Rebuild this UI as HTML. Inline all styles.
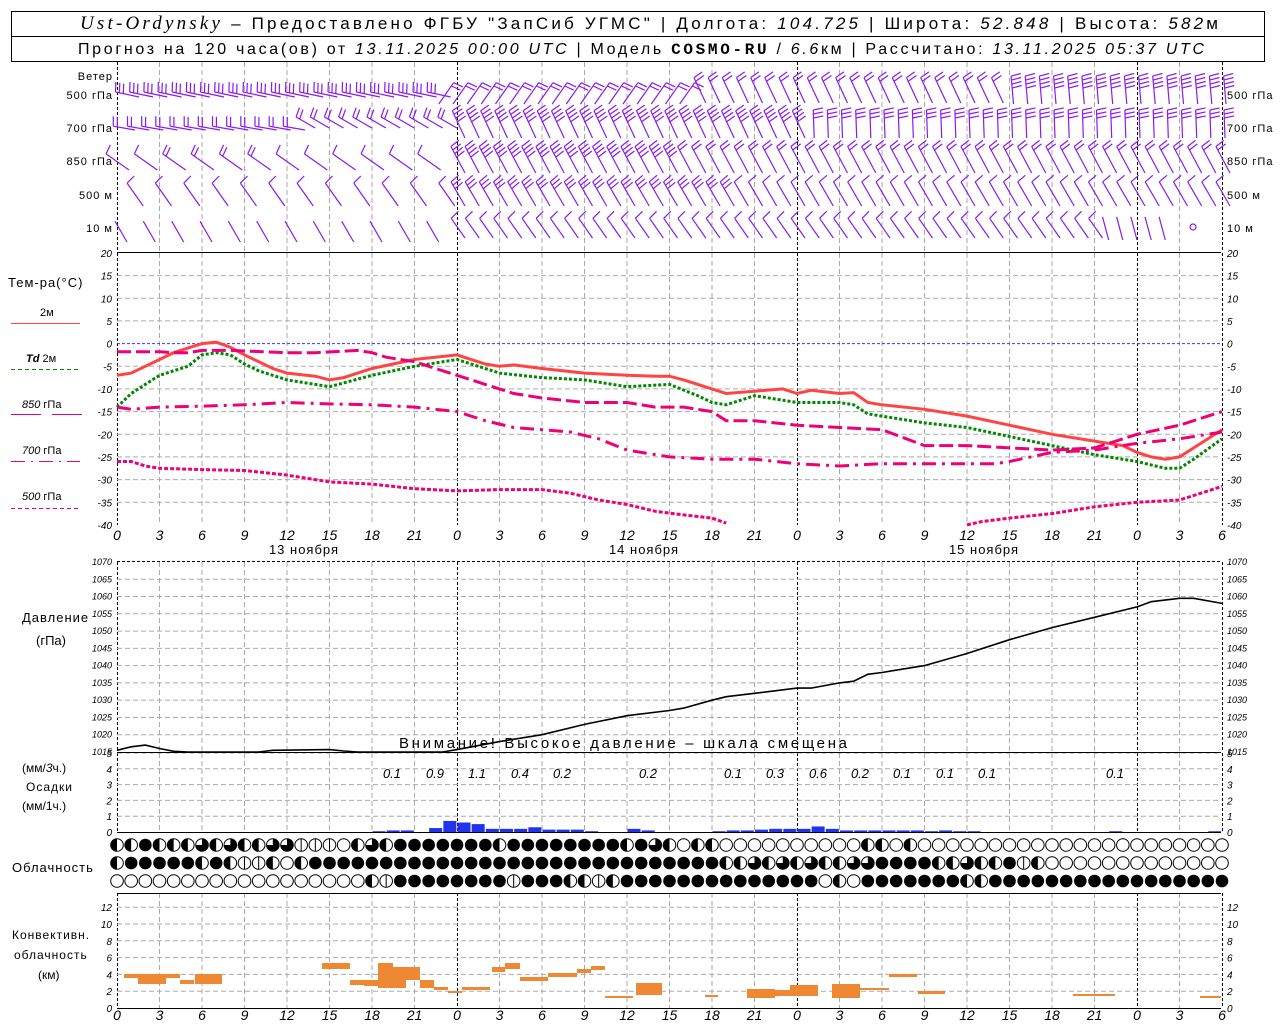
<!DOCTYPE html>
<html><head><meta charset="utf-8"><style>
html,body{margin:0;padding:0;background:#fff}
svg{display:block}
text{font-family:"Liberation Sans",sans-serif}
.it{font-style:italic}
</style></head><body>
<svg id="s" width="1280" height="1024" xmlns="http://www.w3.org/2000/svg">
<rect width="1280" height="1024" fill="#fff"/>
<rect x="11.5" y="11.5" width="1253" height="50" fill="none" stroke="#000"/>
<line x1="11" y1="36.5" x2="1265" y2="36.5" stroke="#000"/>
<text x="80" y="29" font-size="17" textLength="1138" lengthAdjust="spacing"><tspan font-family="Liberation Serif" font-style="italic" font-size="19">Ust-Ordynsky</tspan> – Предоставлено ФГБУ "ЗапСиб УГМС" | Долгота: <tspan class="it">104.725</tspan> | Широта: <tspan class="it">52.848</tspan> | Высота: <tspan class="it">582</tspan>м</text>
<text x="78" y="54" font-size="16" textLength="1126" lengthAdjust="spacing">Прогноз на 120 часа(ов) от <tspan class="it">13.11.2025 00:00 UTC</tspan> | Модель <tspan font-weight="bold" font-family="Liberation Mono">COSMO-RU</tspan> / <tspan class="it">6.6</tspan>км | Рассчитано: <tspan class="it">13.11.2025 05:37 UTC</tspan></text>
<g id="g"></g>
</svg>
<script>
var G=document.getElementById('g'),H='';
function X(h){return 117+h*340/24}
function ln(a,b,c,d,st){H+='<line x1="'+a+'" y1="'+b+'" x2="'+c+'" y2="'+d+'" '+st+'/>';}
function tx(x,y,s,t,extra){H+='<text x="'+x+'" y="'+y+'" font-size="'+s+'" '+(extra||'')+'>'+t+'</text>';}
var gray='stroke="#aaa" stroke-dasharray="5,3"';
var panels=[[62,252],[253,525],[562,752],[753,832],[893,1008]];
panels.forEach(function(p){for(var h=3;h<78;h+=3){if(h%24==0)continue;ln(X(h),p[0],X(h),p[1],gray);}
 [0,24,48,72,78].forEach(function(h){ln(X(h)+.5,p[0],X(h)+.5,p[1],'stroke="#000" stroke-dasharray="3,2"');});});
function TY(t){return 343.6-t*4.533}
function PY(p){return 752-(p-1015)*3.455}
function RY(v){return 832-v*15.8}
function CY(k){return 1008-k*8.4}
for(var t=15;t>-40;t-=5){ln(117,TY(t),1221,TY(t),t==0?'stroke="#33f" stroke-dasharray="3,2"':gray);}
for(var p=1020;p<1070;p+=5)ln(117,PY(p),1221,PY(p),gray);
for(var v=1;v<=5;v++)ln(117,RY(v),1221,RY(v),gray);
for(var k=2;k<=12;k+=2)ln(117,CY(k),1221,CY(k),gray);
ln(117,252.5,1221,252.5,'stroke="#000"');ln(117,752.5,1221,752.5,'stroke="#000"');
ln(117,832.5,1221,832.5,'stroke="#000"');ln(117,893.5,1221,893.5,'stroke="#000"');
ln(117,1008.5,1221,1008.5,'stroke="#000"');ln(117,561.5,1221,561.5,'stroke="#000" stroke-dasharray="3,2"');
for(t=20;t>=-40;t-=5){tx(112,TY(t)+4,10,t,'text-anchor="end" font-style="italic"');tx(1227,TY(t)+4,10,t,'font-style="italic"');}
for(p=1015;p<=1070;p+=5){tx(112,PY(p)+3,9,p,'text-anchor="end" font-style="italic"');tx(1227,PY(p)+3,9,p,'font-style="italic"');}
for(v=0;v<=5;v++){tx(112,RY(v)+4,10,v,'text-anchor="end" font-style="italic"');tx(1227,RY(v)+4,10,v,'font-style="italic"');}
for(k=0;k<=12;k+=2){tx(112,CY(k)+4,10,k,'text-anchor="end" font-style="italic"');tx(1227,CY(k)+4,10,k,'font-style="italic"');}
for(var h=0;h<=78;h+=3){var l=h%24;tx(X(h),540,14,l,'text-anchor="middle" font-style="italic"');tx(X(h),1020,14,l,'text-anchor="middle" font-style="italic"');}
tx(X(13.2),554,13,'13 ноября','text-anchor="middle" letter-spacing="1"');
tx(X(37.2),554,13,'14 ноября','text-anchor="middle" letter-spacing="1"');
tx(X(61.2),554,13,'15 ноября','text-anchor="middle" letter-spacing="1"');
[['Ветер',80,0],['500 гПа',99,1],['700 гПа',132,1],['850 гПа',165,1],['500 м',199,1],['10  м',232,1]].forEach(function(a){tx(113,a[1],11,a[0],'text-anchor="end" letter-spacing="1"');if(a[2])tx(1227,a[1],11,a[0],'letter-spacing="1"');});
tx(8,287,13,'Тем-ра(°C)','letter-spacing="1"');
tx(40,316,11,'2м');ln(11,323.5,80,323.5,'stroke="#f44"');
tx(26,362,11,'<tspan font-style="italic" font-weight="bold">Td</tspan>  2м');ln(11,369.5,80,369.5,'stroke="#080" stroke-dasharray="4,3"');
tx(22,408,11,'<tspan font-style="italic">850</tspan> гПа');ln(11,414.5,41,414.5,'stroke="#e07"');ln(52,414.5,82,414.5,'stroke="#e07"');
tx(22,454,11,'<tspan font-style="italic">700</tspan> гПа');ln(11,461.5,80,461.5,'stroke="#e07" stroke-dasharray="14,6,2,6"');
tx(22,500,11,'<tspan font-style="italic">500</tspan> гПа');ln(11,508.5,80,508.5,'stroke="#e07" stroke-dasharray="4,3"');
tx(22,622,13,'Давление','letter-spacing="1"');tx(36,645,13,'(гПа)');
tx(22,772,12,'(мм/<tspan font-style="italic">3</tspan>ч.)');tx(26,791,12,'Осадки','letter-spacing="1"');tx(22,810,12,'(мм/1ч.)');
tx(12,872,13,'Облачность','letter-spacing="1"');
tx(12,939,12,'Конвективн.','letter-spacing="1"');tx(14,959,12,'облачность','letter-spacing="1"');tx(38,979,12,'(км)');
function poly(pts,f,st){var d='';pts.forEach(function(q,i){d+=(i?'L':'M')+X(q[0]).toFixed(1)+','+f(q[1]).toFixed(1);});H+='<path d="'+d+'" fill="none" '+st+'/>';}
poly([[0,-14],[1,-11],[2,-9],[3,-7],[4,-6],[5,-5],[6,-2.5],[7,-2],[8,-2.5],[9,-4.5],[10,-6],[12,-8],[15,-9.5],[18,-7],[21,-5],[24,-3.5],[25,-4.5],[27,-6.5],[30,-7.5],[33,-8],[36,-9.5],[39,-9],[41,-11.5],[42,-13],[43,-13.5],[44,-12.5],[45,-11.5],[48,-13],[51,-13],[52,-13.5],[53,-15.5],[55,-16.5],[57,-17.5],[60,-18.5],[63,-20.5],[66,-22.5],[69,-24.5],[72,-26],[74,-27.5],[75,-27.5],[76,-25.5],[78,-21]],TY,'stroke="#080" stroke-width="3" stroke-dasharray="3,2"');
poly([[0,-7],[1,-6.5],[2,-5],[3,-3.5],[4,-2],[5,-1],[6,0],[7,0.3],[8,-0.8],[9,-2.5],[10,-4],[11,-5.5],[12,-6.5],[14,-7.2],[15,-8],[16,-7.5],[18,-5.5],[21,-3.5],[24,-2.5],[26,-4.5],[27,-5],[28,-4.7],[30,-5.5],[33,-6.5],[36,-7],[38,-7.2],[39,-7.2],[40,-8],[42,-10],[43,-11],[45,-10.5],[47,-10],[48,-11],[49,-10.3],[51,-11],[52,-10.8],[53,-13],[54,-13.5],[57,-14.5],[60,-16],[63,-18],[66,-20],[69,-21.5],[71,-22.5],[72,-24],[73,-25],[74,-25.5],[75,-25],[76,-23],[78,-19]],TY,'stroke="#f44" stroke-width="3"');
poly([[0,-1.8],[3,-1.8],[4,-2],[5,-2],[6,-1.5],[8,-1.5],[12,-2],[14,-2],[17,-1.5],[18,-2],[19,-3],[21,-4],[22,-5],[24,-7],[26,-9],[28,-11],[30,-12],[33,-13],[36,-13],[38,-14],[40,-14],[42,-15],[43,-17],[45,-17],[48,-18],[51,-18.5],[54,-19],[57,-22.5],[60,-22.5],[63,-23],[66,-23.5],[69,-23],[72,-20],[75,-18],[78,-15]],TY,'stroke="#e07" stroke-width="3" stroke-dasharray="14,5"');
poly([[0,-14],[1,-14.5],[3,-14],[6,-13.8],[9,-13.5],[12,-13],[15,-13.3],[18,-13.5],[21,-14],[24,-15],[26,-17],[28,-18.5],[30,-19],[32,-19.5],[34,-21],[36,-23.5],[39,-25],[42,-25.5],[45,-25.5],[48,-26.5],[51,-27],[54,-26.5],[57,-26.5],[60,-26.5],[62,-26.5],[63,-26],[66,-24],[69,-23.5],[72,-22],[75,-21],[78,-19.5]],TY,'stroke="#e07" stroke-width="3" stroke-dasharray="14,6,3,6"');
poly([[0,-26],[1,-26],[2,-27],[3,-27.5],[6,-27.8],[9,-28],[12,-29],[15,-30.5],[18,-31],[21,-32],[24,-32.5],[27,-32.2],[30,-32.2],[32,-33],[34,-34.5],[36,-35.5],[38,-37],[40,-37.8],[42,-38.5],[43,-39.6]],TY,'stroke="#e07" stroke-width="3" stroke-dasharray="4,2"');
poly([[60,-40],[61,-39.3],[63,-38.5],[66,-37.5],[69,-36],[72,-35],[75,-34.5],[76,-33.5],[78,-31.5]],TY,'stroke="#e07" stroke-width="3" stroke-dasharray="4,2"');
var pp=[[0,1015.5],[1,1016.5],[2,1017],[3,1016],[4,1015.2],[5,1015],[10,1015],[11,1015.5],[15,1015.7],[16,1015.3],[17,1015],[23,1015],[24,1015.7],[27,1018],[30,1020],[33,1023],[36,1025.5],[39,1027],[40,1027.7],[42,1030],[43,1031],[45,1032],[48,1033.5],[49,1033.5],[51,1035],[52,1035.5],[53,1037.5],[54,1038],[57,1040],[60,1043.5],[63,1047.5],[66,1051],[69,1054],[72,1057],[73,1058.5],[75,1059.5],[76,1059.5],[78,1058]];
poly(pp,PY,'stroke="#000" stroke-width="1.6"');
tx(623,748,15,'Внимание! Высокое давление – шкала смещена','text-anchor="middle" textLength="448" lengthAdjust="spacing"');
var pr={18:.05,19:.1,20:.1,22:.25,23:.7,24:.6,25:.5,26:.2,27:.2,28:.2,29:.3,30:.15,31:.15,32:.15,33:.05,36:.2,37:.1,42:.05,43:.1,44:.1,45:.15,46:.2,47:.2,48:.2,49:.35,50:.2,51:.1,52:.1,53:.1,54:.1,55:.1,56:.1,57:.05,58:.1,59:.05,60:.05,70:.05,77:.05};
for(var k2 in pr){var hh=+k2,v2=pr[hh],y=RY(v2);H+='<rect x="'+(X(hh)+.5)+'" y="'+y+'" width="13" height="'+(832-y)+'" fill="#2233ee"/>';}
[[392,'0.1'],[435,'0.9'],[477,'1.1'],[520,'0.4'],[562,'0.2'],[648,'0.2'],[733,'0.1'],[775,'0.3'],[818,'0.6'],[860,'0.2'],[902,'0.1'],[945,'0.1'],[987,'0.1'],[1115,'0.1']].forEach(function(a){tx(a[0],778,13,a[1],'text-anchor="middle" font-style="italic"');});
var rows=[
"2242223232233111023244444442444444442432022000000000022020000000000000000000000",
"2444442421120244444444444444444444444444444223232322334444223224120000000000000",
"0000000000000000002144444444144422124444444444444402044444442244444444444444444"];
[845,863,881].forEach(function(cy,ri){var s=rows[ri];for(var i=0;i<=78;i++){var c=+s.charAt(i)||0,cx=X(i),r=6.3;
 if(c==4)H+='<circle cx="'+cx+'" cy="'+cy+'" r="'+r+'" fill="#000"/>';
 else{H+='<circle cx="'+cx+'" cy="'+cy+'" r="'+r+'" fill="#fff" stroke="#000" stroke-width="1"/>';
  if(c==1)ln(cx,cy-r,cx,cy+r,'stroke="#000"');
  if(c==2)H+='<path d="M'+cx+','+(cy-r)+'A'+r+','+r+' 0 0 0 '+cx+','+(cy+r)+'Z" fill="#000"/>';
  if(c==3)H+='<path d="M'+cx+','+cy+'L'+cx+','+(cy-r)+'A'+r+','+r+' 0 1 1 '+(cx-r)+','+cy+'Z" fill="#000"/>';}}});
[[124,138,974,978],[138,166,974,984],[166,180,974,978],[180,194,980,984],[195,208,974,984],[208,222,974,984],[322,350,963,969],[350,364,980,985],[364,378,980,986],[378,393,963,988],[393,406,967,988],[406,420,967,980],[420,434,980,988],[434,448,987,990],[448,462,991,993],[462,490,987,990],[492,505,967,972],[505,520,963,969],[520,548,977,981],[548,577,973,977],[577,591,969,973],[591,605,966,970],[605,633,996,998],[636,662,983,995],[705,718,995,997],[747,775,989,998],[775,790,990,996],[790,818,985,996],[832,860,984,998],[860,889,988,990],[889,917,974,977],[918,945,991,994],[1073,1115,994,996],[1200,1221,996,998]].forEach(function(b){H+='<rect x="'+b[0]+'" y="'+b[2]+'" width="'+(b[1]-b[0])+'" height="'+(b[3]-b[2])+'" fill="#ee8833"/>';});
var pc='stroke="#8a1aee" stroke-width="1.2"';
function barb(x,y,ang,n,L){L=L||26;var a=ang*Math.PI/180,tx2=x+L*Math.cos(a),ty2=y-L*Math.sin(a);ln(x.toFixed(1),y.toFixed(1),tx2.toFixed(1),ty2.toFixed(1),pc);
 var fa=(ang-80)*Math.PI/180;for(var i=0;i<n;i++){var bx=tx2-i*4*Math.cos(a),by=ty2+i*4*Math.sin(a);ln(bx.toFixed(1),by.toFixed(1),(bx+10*Math.cos(fa)).toFixed(1),(by-10*Math.sin(fa)).toFixed(1),pc);}}
for(h=0;h<=78;h++){var x=X(h);
 if(h<=22)barb(x+22,97,168,3,24);else if(h<=40)barb(x-4,104,55,2,26);else if(h<=62)barb(x+8,103,115,2,28);else barb(x+4,104,95,4,28);
 if(h<=12)barb(x+18,130,170,2,22);else if(h<=23)barb(x+14,128,150,2,22);else if(h<=48)barb(x+8,138,115,4,30);else barb(x+3,138,92,3,28);
 if(h<24){if(h%2==0)barb(x+12,170,145,h<12&&h>3?2:1,28);}else barb(x+8,173,118,h<40?4:2,30);
 if(h<24){if(h%2==1)barb(x+12,206,125,1,28);}else barb(x+8,206,120,h<44?3:1,28);
 if(h<24){if(h%2==0)barb(x+10,242,120,0,24);}else if(h<70)barb(x+8,238,125,1,24);else if(h<75)barb(x,240,105,0,24);
}
H+='<circle cx="1193" cy="227" r="3" fill="none" '+pc+'/>';
G.innerHTML=H;
</script>
</body></html>
